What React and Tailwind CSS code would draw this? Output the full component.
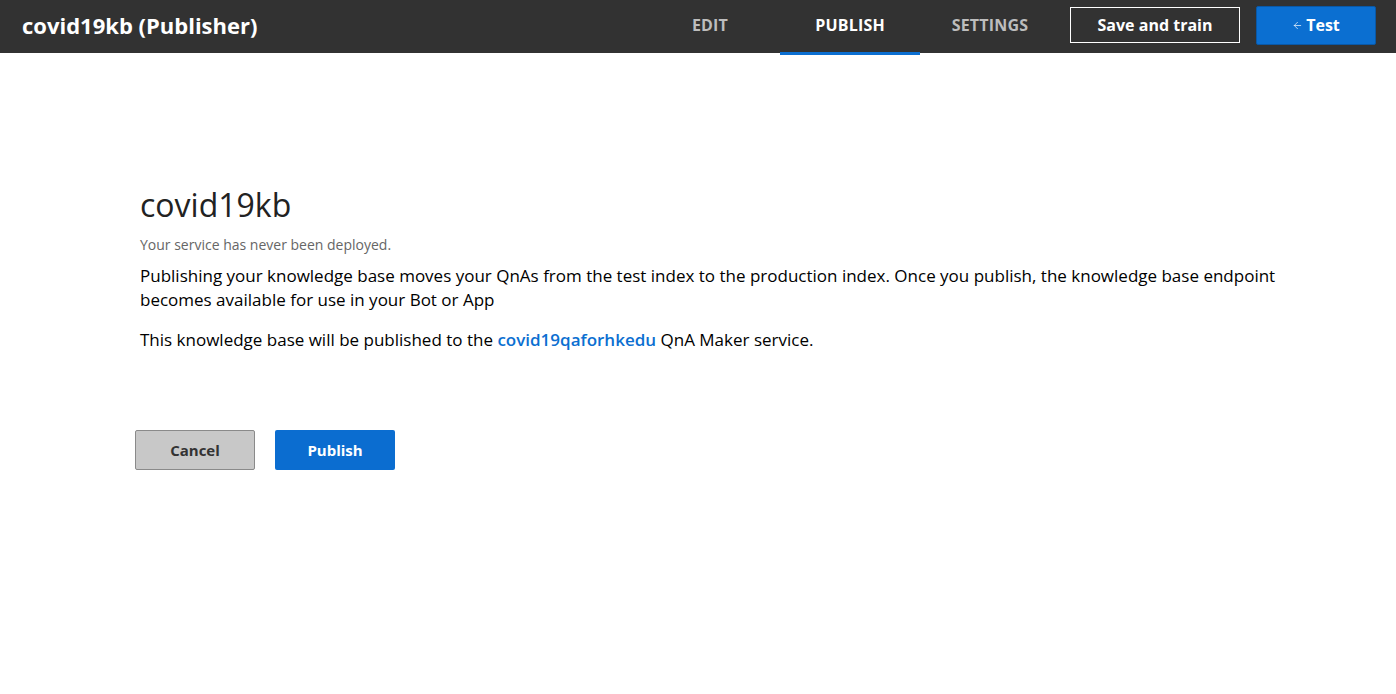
import { ArrowLeft } from 'lucide-react';

const tabs = [
  { label: 'EDIT', active: false },
  { label: 'PUBLISH', active: true },
  { label: 'SETTINGS', active: false },
];

const Header = () => (
  <header className="h-[53px] bg-[#323232] flex items-center pl-[22px] pr-[20px] pb-[3px]">
    <h1 className="text-white font-bold text-[22px]">covid19kb (Publisher)</h1>
    <nav className="ml-auto flex self-stretch -mb-[3px]">
      {tabs.map((t) => (
        <div
          key={t.label}
          className={`relative w-[140px] h-full flex items-center justify-center pb-[3px] font-bold text-[16px] tracking-[0.2px] ${
            t.active ? 'text-white' : 'text-[#bdbdbd]'
          }`}
        >
          {t.label}
          {t.active && <span className="absolute left-0 right-0 -bottom-[2px] h-[3px] bg-[#0b6fd1]" />}
        </div>
      ))}
    </nav>
    <button className="ml-[10px] w-[170px] h-[36px] border border-white text-white font-bold text-[16px]">
      Save and train
    </button>
    <button className="ml-[16px] w-[120px] h-[39px] bg-[#0b6fd1] border border-[#0a58a6] rounded-[2px] text-white font-bold text-[16px] flex items-center justify-center gap-[3px]">
      <ArrowLeft className="w-[11px] h-[11px]" strokeWidth={1.5} />
      Test
    </button>
  </header>
);

export default function App() {
  return (
    <div className="min-h-screen bg-white text-black" style={{ fontFamily: '"Open Sans", "Noto Sans", sans-serif' }}>
      <Header />
      <main className="pl-[140px] pr-[100px] pt-[132px]">
        <h2 className="text-[32px] leading-[40px] text-[#222]">covid19kb</h2>
        <p className="mt-[11px] text-[14px] leading-[18px] text-[#666]">Your service has never been deployed.</p>
        <p className="mt-[10px] text-[17px] leading-[24px]">
          Publishing your knowledge base moves your QnAs from the test index to the production index. Once you publish,
          the knowledge base endpoint becomes available for use in your Bot or App
        </p>
        <p className="mt-[16px] text-[17px] leading-[24px]">
          This knowledge base will be published to the{' '}
          <span className="font-semibold text-[#0b6fd1]">covid19qaforhkedu</span> QnA Maker service.
        </p>
        <div className="mt-[78px] -ml-[5px] flex gap-[20px]">
          <button className="w-[120px] h-[40px] bg-[#c8c8c8] border border-[#8a8a8a] rounded-[2px] text-[#333] font-bold text-[15px]">
            Cancel
          </button>
          <button className="w-[120px] h-[40px] bg-[#0b6dd0] rounded-[2px] text-white font-bold text-[15px]">
            Publish
          </button>
        </div>
      </main>
    </div>
  );
}
